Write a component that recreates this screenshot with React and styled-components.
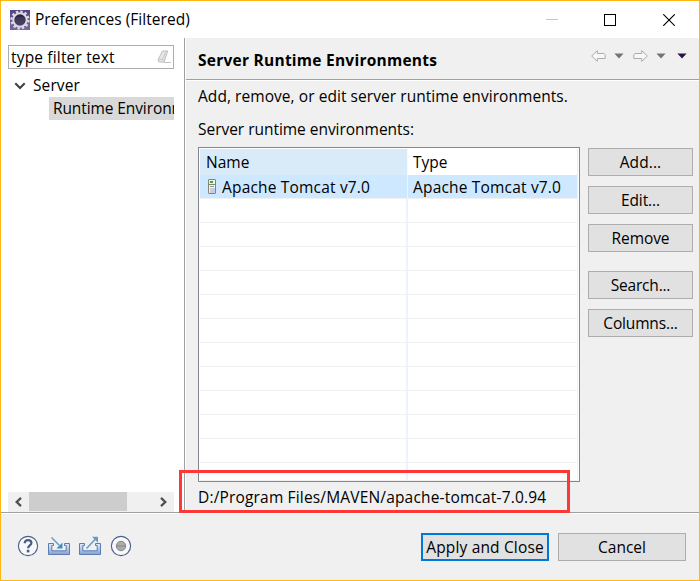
import React from "react";
import styled, { createGlobalStyle } from "styled-components";

const GlobalStyle = createGlobalStyle`
  * { box-sizing: border-box; }
  html, body { margin: 0; padding: 0; }
  body {
    font-family: "Open Sans", "Noto Sans", sans-serif;
    font-size: 15.5px;
    color: #000;
    overflow: hidden;
  }
`;

const Window = styled.div`
  position: relative;
  width: 700px;
  height: 581px;
  border: 1px solid #fdb813;
  background: #f0f0f0;
  display: flex;
  flex-direction: column;
`;

const Text = styled.span`
  white-space: pre;
  line-height: 20px;
  letter-spacing: ${(p) => p.$spacing || 0}px;
  font-weight: ${(p) => (p.$bold ? 700 : 400)};
`;

const TitleBar = styled.header`
  height: 37px;
  flex: none;
  background: #fff;
  display: flex;
  align-items: center;
  padding-left: 9px;
  svg { flex: none; }
  & > span { margin: 0 0 2px 5px; }
`;

const WindowControls = styled.div`
  margin-left: auto;
  display: flex;
  gap: 46px;
  padding-right: 23px;
  svg { display: block; }
`;

const Body = styled.div`
  height: 474px;
  flex: none;
  display: flex;
`;

const Sidebar = styled.nav`
  width: 183px;
  flex: none;
  background: #fff;
  padding: 7px 10px 0 7px;
  display: flex;
  flex-direction: column;
`;

const FilterField = styled.div`
  height: 24px;
  border: 1px solid #abadb3;
  display: flex;
  align-items: center;
  justify-content: space-between;
  padding: 0 2px;
`;

const TreeRow = styled.div`
  height: 23px;
  flex: none;
  display: flex;
  align-items: center;
  margin-top: ${(p) => p.$top || 0}px;
  margin-left: ${(p) => p.$indent}px;
  padding: 0 0 2px ${(p) => (p.$selected ? 4 : 0)}px;
  background: ${(p) => (p.$selected ? "#d9d9d9" : "transparent")};
  overflow: hidden;
  gap: 7px;
  svg { margin-top: 3px; flex: none; }
`;

const ScrollBar = styled.div`
  height: 20px;
  margin-top: auto;
  background: #f0f0f0;
  display: flex;
`;

const ScrollArrow = styled.div`
  width: 21px;
  padding: 0 1px 1px 0;
  display: flex;
  align-items: center;
  justify-content: center;
`;

const ScrollThumb = styled.div`
  width: 98px;
  height: 19px;
  background: #cdcdcd;
  margin-right: auto;
`;

const Main = styled.main`
  flex: 1;
  min-width: 0;
  border-left: 1px solid #a0a0a0;
  box-shadow: inset 1px 0 #fff;
  display: flex;
  flex-direction: column;
`;

const PageHeader = styled.div`
  height: 43px;
  flex: none;
  margin-left: 1px;
  padding: 1px 12px 0 12px;
  border-bottom: 1px solid #fff;
  box-shadow: inset 0 -1px #a0a0a0;
  display: flex;
  align-items: center;
  justify-content: space-between;
`;

const HistoryTools = styled.div`
  display: flex;
  align-items: center;
  margin-top: -8px;
  svg { display: block; }
`;

const HistoryGroup = styled.div`
  display: flex;
  align-items: center;
  margin-right: ${(p) => p.$gap || 0}px;
`;

const Description = styled.div`
  height: 66px;
  flex: none;
  padding: 5px 0 0 13px;
  display: flex;
  flex-direction: column;
  gap: 13px;
`;

const Content = styled.div`
  display: flex;
  gap: 8px;
  padding-left: 13px;
`;

const Table = styled.div`
  width: 382px;
  height: 335px;
  border: 1px solid #828790;
  background: #fff;
  padding: 1px;
  display: flex;
  flex-direction: column;
`;

const Row = styled.div`
  display: grid;
  grid-template-columns: 208px 1fr;
  height: 24px;
  flex: none;
`;

const HeaderRow = styled(Row)`
  height: 26px;
`;

const LastRow = styled(Row)`
  height: 18px;
`;

const HeaderCell = styled.div`
  padding: 2px 0 0 ${(p) => (p.$sorted ? 6 : 5)}px;
  background: ${(p) => (p.$sorted ? "#d9ebf9" : "#fff")};
  border-right: 1px solid ${(p) => (p.$sorted ? "#f4f9fd" : "#e8edf5")};
`;

const Cell = styled.div`
  padding: 0 0 0 ${(p) => p.$left || 5}px;
  display: flex;
  align-items: center;
  gap: 6px;
  background: ${(p) => (p.$selected ? "#cde8ff" : "#fff")};
  border-bottom: 1px solid #f0f0f0;
  border-right: ${(p) => (p.$first && !p.$selected ? 2 : 1)}px solid #edf3fd;
`;

const ButtonColumn = styled.div`
  width: 105px;
  padding-top: 1px;
  display: flex;
  flex-direction: column;
  gap: 10px;
`;

const Button = styled.button`
  width: ${(p) => p.$width || 105}px;
  height: 28px;
  flex: none;
  margin: ${(p) => p.$top || 0}px 0 0;
  padding: 0;
  border: ${(p) => (p.$primary ? "2px solid #0078d7" : "1px solid #adadad")};
  background: #e1e1e1;
  color: #000;
  font: inherit;
  display: flex;
  align-items: center;
  justify-content: center;
`;

const Location = styled.div`
  padding: 4px 0 0 13px;
`;

const Footer = styled.footer`
  flex: 1;
  border-top: 1px solid #a0a0a0;
  box-shadow: inset 0 1px #fff;
  display: flex;
  padding: 20px 13px 0 16px;
`;

const FooterTools = styled.div`
  display: flex;
  align-items: center;
  height: 26px;
  gap: 9px;
  margin-right: auto;
  svg { display: block; }
`;

const FooterButtons = styled.div`
  display: flex;
  gap: 9px;
`;

const Highlight = styled.div`
  position: absolute;
  left: 178px;
  top: 469px;
  width: 391px;
  height: 43px;
  border: 3px solid #ff3737;
`;

const AppIcon = () => (
  <svg width="20" height="20" viewBox="0 0 20 20">
    <defs>
      <linearGradient id="app-bg" x1="0" y1="0" x2="0" y2="1">
        <stop offset="0" stopColor="#54457f" />
        <stop offset="1" stopColor="#7566a5" />
      </linearGradient>
      <linearGradient id="app-core" x1="0" y1="0" x2="0" y2="1">
        <stop offset="0" stopColor="#241c3a" />
        <stop offset="1" stopColor="#544a72" />
      </linearGradient>
    </defs>
    <rect width="20" height="20" fill="url(#app-bg)" />
    <circle cx="10" cy="10" r="8.5" fill="none" stroke="#dedbe3" strokeWidth="2.2" strokeDasharray="2.45 2" />
    <circle cx="10" cy="10" r="6.7" fill="url(#app-core)" stroke="#dedbe3" strokeWidth="2" />
    <path d="M5.5 8h9M5 10h10M5.5 12h9" stroke="#564d70" strokeWidth=".6" />
  </svg>
);

const Eraser = () => (
  <svg width="14" height="14" viewBox="0 0 14 14">
    <path d="M5.5 1h5.2L7 12H2L1 10Z" fill="#e8e8e8" stroke="#bcbcbc" />
    <path d="m1.2 9.6 4.3-.2L9 1M5.5 9.4 6.8 12" fill="none" stroke="#c8c8c8" />
    <path d="M7 12.5h7" stroke="#c2c2c2" />
  </svg>
);

const Chevron = () => (
  <svg width="12" height="8" viewBox="0 0 12 8">
    <path d="m1.3 1.3 4.7 4.7 4.7-4.7" fill="none" stroke="#404040" strokeWidth="2" />
  </svg>
);

const ScrollChevron = ({ d }) => (
  <svg width="9" height="10" viewBox="0 0 9 10">
    <path d={d} fill="none" stroke="#505050" strokeWidth="2.3" />
  </svg>
);

const HistoryArrow = ({ forward }) => (
  <svg width="15" height="12" viewBox="0 0 15 12">
    <path
      d={forward ? "M14.3 6 8.7.6v2.9H2L.8 4.7v3.8h7.9v2.9Z" : "M.7 6 6.3.6v2.9H13l1.2 1.2v3.8H6.3v2.9Z"}
      fill="#f7f7f7"
      stroke="#acacac"
      strokeLinejoin="round"
    />
  </svg>
);

const Caret = ({ color = "#747474", left }) => (
  <svg width={left + 10} height="6" viewBox={`${-left} 0 ${left + 10} 6`}>
    <path d="M.4.6h9.2L5 5.6Z" fill={color} />
  </svg>
);

const ServerIcon = () => (
  <svg width="8" height="16" viewBox="0 0 8 16">
    <rect x=".5" y=".5" width="7" height="14" rx=".5" fill="#f1f1e8" stroke="#85866f" />
    <path d="M1 5.5h6" stroke="#85866f" />
    <rect x="2" y="2" width="3" height="2" fill="#37a852" />
    <rect x="2" y="7" width="4" height="1" fill="#9b9c8a" />
    <rect x="2" y="9" width="5" height="5" fill="#c8cce4" />
  </svg>
);

const HelpIcon = () => (
  <svg width="22" height="22" viewBox="0 0 22 22">
    <circle cx="11" cy="11" r="9.6" fill="#f8f9fb" stroke="#4b5d84" strokeWidth="1.1" />
    <path d="M7.7 8.3C7.7 6.1 9.1 5.1 11 5.1c2 0 3.4 1.1 3.4 2.9 0 2.4-3.3 2.5-3.3 5.2" fill="none" stroke="#4b5d84" strokeWidth="2.2" />
    <rect x="9.8" y="14.8" width="2.6" height="2.6" fill="#4b5d84" />
  </svg>
);

const Tray = ({ outgoing }) => (
  <svg width="22" height="20" viewBox="0 0 22 20">
    <defs>
      <linearGradient id="tray-fill" x1="0" y1="0" x2="0" y2="1">
        <stop offset="0" stopColor="#e2ecf8" />
        <stop offset="1" stopColor="#82a3d4" />
      </linearGradient>
    </defs>
    <path
      d="M5.5 7.5h-5v11h21v-11h-5v2h1.7v5.3H3.8V9.5h1.7Z"
      fill="url(#tray-fill)"
      stroke="#5d7cb2"
    />
    {outgoing ? (
      <g>
        <path d="M7.5 12.5 16.5 3" stroke="#5f9dcc" strokeWidth="1.5" />
        <path d="M13 .7h6v6Z" fill="#5f9dcc" />
      </g>
    ) : (
      <g>
        <path d="m3.5 1.5 8 8" stroke="#5f9dcc" strokeWidth="1.5" />
        <path d="M14.5 6.5v6h-6Z" fill="#438bc0" />
      </g>
    )}
  </svg>
);

const RecordIcon = () => (
  <svg width="22" height="22" viewBox="0 0 22 22">
    <circle cx="11" cy="11" r="9.6" fill="#f8f9fb" stroke="#4b5d84" strokeWidth="1.1" />
    <circle cx="11" cy="11" r="4.7" fill="#acacac" stroke="#858585" />
    <path d="M6.5 11h9" stroke="#858585" />
  </svg>
);

const Controls = () => (
  <WindowControls>
    <svg width="12" height="12" viewBox="0 0 12 12"><path d="M0 5.5h12" stroke="#c6c6c6" /></svg>
    <svg width="13" height="12" viewBox="0 0 13 12"><rect x=".5" y=".5" width="11" height="11" fill="none" stroke="#000" shapeRendering="crispEdges" /></svg>
    <svg width="13" height="12" viewBox="0 0 13 12"><path d="m.3.3 11.5 11.5m0-11.5L.3 11.8" stroke="#000" strokeWidth="1.1" /></svg>
  </WindowControls>
);

const actions = [
  { label: "Add...", spacing: 0.1 },
  { label: "Edit...", spacing: -0.1 },
  { label: "Remove", spacing: -0.1 },
  { label: "Search...", top: 9, spacing: -0.2 },
  { label: "Columns...", spacing: -0.15 },
];

export default function App() {
  return (
    <Window>
      <GlobalStyle />
      <TitleBar>
        <AppIcon />
        <Text $spacing={0.03}>Preferences (Filtered)</Text>
        <Controls />
      </TitleBar>
      <Body>
        <Sidebar>
          <FilterField>
            <Text $spacing={0.17}>type filter text</Text>
            <Eraser />
          </FilterField>
          <TreeRow $top={5} $indent={6}>
            <Chevron />
            <Text $spacing={0.1}>Server</Text>
          </TreeRow>
          <TreeRow $indent={41} $selected>
            <Text $spacing={-0.1}>Runtime Environments</Text>
          </TreeRow>
          <ScrollBar>
            <ScrollArrow><ScrollChevron d="M7 .9 2.7 5 7 9.1" /></ScrollArrow>
            <ScrollThumb />
            <ScrollArrow><ScrollChevron d="M2 .9 6.3 5 2 9.1" /></ScrollArrow>
          </ScrollBar>
        </Sidebar>
        <Main>
          <PageHeader>
            <Text $bold $spacing={0.25}>Server Runtime Environments</Text>
            <HistoryTools>
              <HistoryGroup $gap={9}>
                <HistoryArrow />
                <Caret left={8} />
              </HistoryGroup>
              <HistoryGroup>
                <HistoryArrow forward />
                <Caret left={8} />
              </HistoryGroup>
              <Caret left={11} color="#2a1344" />
            </HistoryTools>
          </PageHeader>
          <Description>
            <Text $spacing={0.06}>Add, remove, or edit server runtime environments.</Text>
            <Text $spacing={-0.03}>Server runtime environments:</Text>
          </Description>
          <Content>
            <Table>
              <HeaderRow>
                <HeaderCell $sorted><Text>Name</Text></HeaderCell>
                <HeaderCell><Text>Type</Text></HeaderCell>
              </HeaderRow>
              <Row>
                <Cell $selected $first $left={8}>
                  <ServerIcon />
                  <Text $spacing={0.18}>Apache Tomcat v7.0</Text>
                </Cell>
                <Cell $selected><Text $spacing={0.18}>Apache Tomcat v7.0</Text></Cell>
              </Row>
              {Array.from({ length: 11 }, (_, i) => (
                <Row key={i}><Cell $first /><Cell /></Row>
              ))}
              <LastRow><Cell $first /><Cell /></LastRow>
            </Table>
            <ButtonColumn>
              {actions.map((a) => (
                <Button key={a.label} $top={a.top}><Text $spacing={a.spacing}>{a.label}</Text></Button>
              ))}
            </ButtonColumn>
          </Content>
          <Location><Text $spacing={0.17}>D:/Program Files/MAVEN/apache-tomcat-7.0.94</Text></Location>
        </Main>
      </Body>
      <Footer>
        <FooterTools>
          <HelpIcon />
          <Tray />
          <Tray outgoing />
          <RecordIcon />
        </FooterTools>
        <FooterButtons>
          <Button $width={128} $primary><Text $spacing={0.16}>Apply and Close</Text></Button>
          <Button $width={128}><Text>Cancel</Text></Button>
        </FooterButtons>
      </Footer>
      <Highlight />
    </Window>
  );
}
